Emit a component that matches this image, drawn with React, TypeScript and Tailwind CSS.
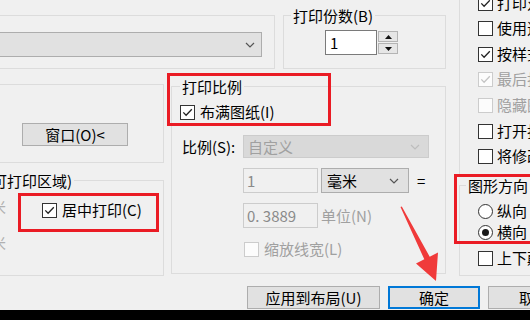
import React from "react";

const Chevron = ({ color = "#555555" }: { color?: string }) => (
  <svg width="10" height="6" viewBox="0 0 10 6" className="block">
    <path d="M1 1 L5 5 L9 1" fill="none" stroke={color} strokeWidth="1.2" />
  </svg>
);

const CheckBox = ({ checked = false, disabled = false }: { checked?: boolean; disabled?: boolean }) => (
  <span
    className={
      disabled
        ? "flex h-[15px] w-[15px] shrink-0 items-center justify-center border border-[#cccccc] bg-[#fcfcfc]"
        : "flex h-[15px] w-[15px] shrink-0 items-center justify-center border border-[#333333] bg-white"
    }
  >
    {checked && (
      <svg width="13" height="13" viewBox="0 0 13 13" className="block">
        <path d="M2.3 6.4 L5.1 9.3 L10.8 3.3" fill="none" stroke={disabled ? "#c4c4c4" : "#222222"} strokeWidth="1.3" />
      </svg>
    )}
  </span>
);

const Radio = ({ selected = false }: { selected?: boolean }) => (
  <span className="flex h-[15px] w-[15px] shrink-0 items-center justify-center rounded-full border border-[#333333] bg-white">
    {selected && <span className="h-[7px] w-[7px] rounded-full bg-[#1a1a1a]" />}
  </span>
);

const Legend = ({ children, className = "" }: { children: React.ReactNode; className?: string }) => (
  <div className={`-mt-[10px] w-fit whitespace-nowrap bg-[#f0f0f0] px-[2px] leading-[19px] ${className}`}>{children}</div>
);

const options = [
  { label: "打印对象线宽", checked: true, disabled: false, gap: "mt-[12px]" },
  { label: "使用透明度打印", checked: false, disabled: false, gap: "mt-[5px]" },
  { label: "按样式打印", checked: true, disabled: false, gap: "mt-[6px]" },
  { label: "最后打印图纸空间", checked: true, disabled: true, gap: "mt-[5px]" },
  { label: "隐藏图纸空间对象", checked: false, disabled: true, gap: "mt-[6px]" },
  { label: "打开打印戳记", checked: false, disabled: false, gap: "mt-[6px]" },
  { label: "将修改保存到布局", checked: false, disabled: false, gap: "mt-[5px]" },
];

export default function App() {
  return (
    <div className="relative flex h-[320px] w-[530px] flex-col overflow-hidden bg-[#f0f0f0] font-['Noto_Sans_CJK_SC',sans-serif] text-[15px] leading-[20px] text-black">
      <div className="flex h-[286px] shrink-0">
        {/* left part */}
        <div className="flex w-[446px] shrink-0 flex-col">
          <div className="flex h-[69px] shrink-0">
            <div className="-ml-[20px] mt-[15px] h-[54px] w-[295px] shrink-0 border border-[#dcdcdc]">
              <div className="ml-[10px] mt-[16px] flex h-[25px] w-[271px] items-center justify-end border border-[#adadad] bg-[#e1e1e1] pr-[6px]">
                <Chevron />
              </div>
            </div>
            <div className="ml-[8px] mt-[15px] h-[54px] w-[163px] shrink-0 border border-[#dcdcdc]">
              <Legend className="ml-[7px]">打印份数(B)</Legend>
              <div className="ml-[41px] mt-[5px] flex h-[25px]">
                <div className="flex w-[52px] items-center border border-[#7a7a7a] bg-white pl-[4px]">1</div>
                <div className="flex w-[21px] flex-col gap-[1px] py-[1px] pl-[1px]">
                  <div className="flex h-[11px] items-center justify-center border border-[#b4b4b4] bg-[#e6e6e6]">
                    <svg width="7" height="4" viewBox="0 0 7 4" className="block">
                      <polygon points="0,4 7,4 3.5,0" fill="#111111" />
                    </svg>
                  </div>
                  <div className="flex h-[11px] items-center justify-center border border-[#b4b4b4] bg-[#e6e6e6]">
                    <svg width="7" height="4" viewBox="0 0 7 4" className="block">
                      <polygon points="0,0 7,0 3.5,4" fill="#111111" />
                    </svg>
                  </div>
                </div>
              </div>
            </div>
          </div>

          <div className="flex">
            <div className="flex w-[164px] shrink-0 flex-col">
              <div className="-ml-[20px] mt-[15px] h-[79px] w-[184px] border border-[#dcdcdc]">
                <button className="ml-[41px] mt-[38px] h-[23px] w-[106px] border border-[#adadad] bg-[#e1e1e1] leading-[21px]">
                  窗口(O)&lt;
                </button>
              </div>
              <div className="-ml-[20px] mt-[17px] h-[96px] w-[184px] border border-[#dcdcdc]">
                <div className="-mt-[10px] flex w-[93px] justify-end">
                  <div className="shrink-0 whitespace-nowrap bg-[#f0f0f0] px-[2px] leading-[19px]">打印偏移(原点设置在可打印区域)</div>
                </div>
                <div className="flex">
                  <div className="flex w-[25px] shrink-0 flex-col items-end text-[#b0b0b0]">
                    <div className="mt-[7px] whitespace-nowrap">毫米</div>
                    <div className="mt-[16px] whitespace-nowrap">毫米</div>
                  </div>
                  <div className="ml-[36px] mt-[10px] flex h-[20px] items-center whitespace-nowrap">
                    <CheckBox checked />
                    <span className="ml-[5px]">居中打印(C)</span>
                  </div>
                </div>
              </div>
            </div>

            <div className="ml-[7px] mt-[17px] h-[188px] w-[275px] shrink-0 border border-[#dcdcdc]">
              <Legend className="ml-[8px]">打印比例</Legend>
              <div className="ml-[8px] mt-[6px] flex h-[20px] items-center">
                <CheckBox checked />
                <span className="ml-[5px]">布满图纸(I)</span>
              </div>
              <div className="mt-[13px] flex h-[23px] items-center">
                <span className="ml-[10px] w-[61px] shrink-0 whitespace-nowrap">比例(S):</span>
                <div className="flex h-[23px] w-[186px] items-center justify-between border border-[#cccccc] bg-[#d9d9d9] pl-[4px] pr-[8px] text-[#a0a0a0]">
                  <span>自定义</span>
                  <Chevron color="#bdbdbd" />
                </div>
              </div>
              <div className="mt-[10px] flex h-[25px] items-center">
                <div className="ml-[71px] flex h-[25px] w-[75px] items-center border border-[#cccccc] pl-[3px] text-[#8a8a8a]">1</div>
                <div className="ml-[3px] flex h-[25px] w-[88px] items-center justify-between border border-[#adadad] bg-[#e1e1e1] pl-[5px] pr-[9px]">
                  <span>毫米</span>
                  <Chevron />
                </div>
                <span className="ml-[8px]">=</span>
              </div>
              <div className="mt-[10px] flex h-[25px] items-center">
                <div className="ml-[71px] flex h-[25px] w-[75px] items-center border border-[#cccccc] pl-[3px] text-[#8a8a8a]">0. 3889</div>
                <span className="ml-[3px] whitespace-nowrap text-[#a0a0a0]">单位(N)</span>
              </div>
              <div className="mt-[11px] flex h-[20px] items-center">
                <span className="ml-[72px]">
                  <CheckBox disabled />
                </span>
                <span className="ml-[5px] whitespace-nowrap text-[#a0a0a0]">缩放线宽(L)</span>
              </div>
            </div>
          </div>
        </div>

        {/* right part */}
        <div className="ml-[13px] flex w-[120px] shrink-0 flex-col">
          <div className="-mt-[20px] h-[197px] border border-[#dcdcdc]">
            {options.map((o) => (
              <div key={o.label} className={`${o.gap} flex h-[20px] items-center whitespace-nowrap`}>
                <span className="ml-[18px]">
                  <CheckBox checked={o.checked} disabled={o.disabled} />
                </span>
                <span className={o.disabled ? "ml-[4px] text-[#a0a0a0]" : "ml-[4px]"}>{o.label}</span>
              </div>
            ))}
          </div>
          <div className="mt-[8px] h-[91px] border border-[#dcdcdc]">
            <Legend className="ml-[6px]">图形方向</Legend>
            <div className="mt-[6px] flex h-[20px] items-center whitespace-nowrap">
              <span className="ml-[18px]">
                <Radio />
              </span>
              <span className="ml-[4px]">纵向</span>
            </div>
            <div className="mt-[1px] flex h-[20px] items-center whitespace-nowrap">
              <span className="ml-[18px]">
                <Radio selected />
              </span>
              <span className="ml-[4px]">横向</span>
            </div>
            <div className="mt-[6px] flex h-[20px] items-center whitespace-nowrap">
              <span className="ml-[18px]">
                <CheckBox />
              </span>
              <span className="ml-[4px]">上下颠倒打印</span>
            </div>
          </div>
        </div>
      </div>

      <div className="flex h-[23px] shrink-0">
        <button className="ml-[247px] h-[23px] w-[133px] shrink-0 border border-[#adadad] bg-[#e1e1e1] leading-[21px]">
          应用到布局(U)
        </button>
        <button className="ml-[8px] h-[23px] w-[92px] shrink-0 border-2 border-[#0078d7] bg-[#e1e1e1] leading-[19px]">
          确定
        </button>
        <button className="ml-[8px] h-[23px] w-[92px] shrink-0 border border-[#adadad] bg-[#e1e1e1] leading-[21px]">
          取消
        </button>
      </div>
      <div className="mt-[1px] h-[10px] shrink-0 bg-black" />

      {/* annotations */}
      <div className="absolute left-[167px] top-[73px] h-[53px] w-[164px] border-[3px] border-[#ea1b24]" />
      <div className="absolute left-[18px] top-[193px] h-[39px] w-[141px] border-[3px] border-[#ea1b24]" />
      <div className="absolute left-[454px] top-[174px] h-[70px] w-[100px] border-[3px] border-[#ea1b24]" />
      <svg className="absolute left-0 top-0" width="530" height="320" viewBox="0 0 530 320">
        <polygon
          points="400.5,207 401.8,206.5 429.7,256.7 438,252.5 436,281 416,263.5 424.3,259.3"
          fill="#f03a3a"
        />
      </svg>
    </div>
  );
}
